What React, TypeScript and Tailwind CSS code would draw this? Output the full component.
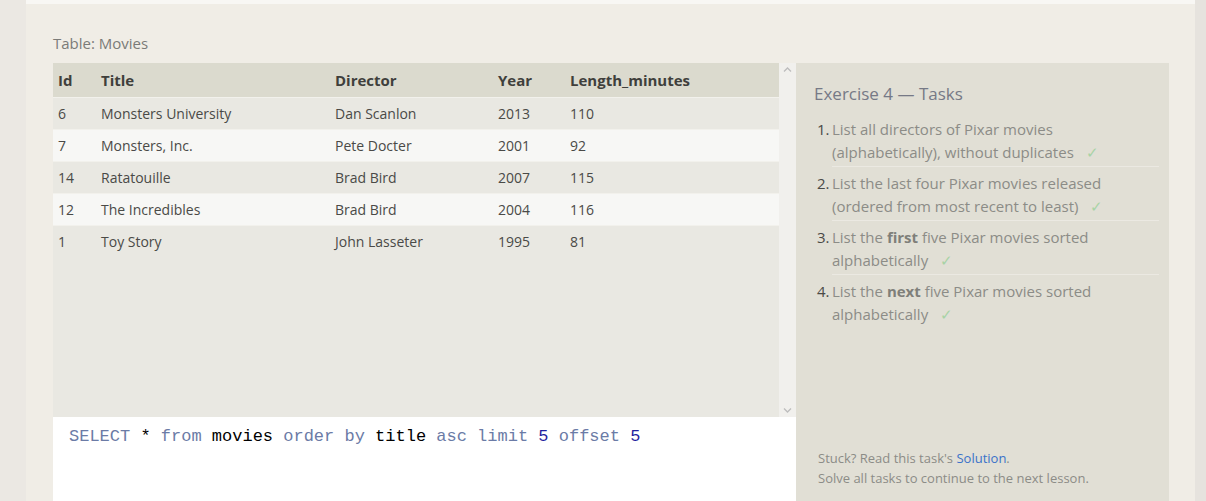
import React from "react";

const rows = [
  { id: 6, title: "Monsters University", director: "Dan Scanlon", year: 2013, len: 110 },
  { id: 7, title: "Monsters, Inc.", director: "Pete Docter", year: 2001, len: 92 },
  { id: 14, title: "Ratatouille", director: "Brad Bird", year: 2007, len: 115 },
  { id: 12, title: "The Incredibles", director: "Brad Bird", year: 2004, len: 116 },
  { id: 1, title: "Toy Story", director: "John Lasseter", year: 1995, len: 81 },
];

function Check() {
  return <span className="ml-3 text-[#a8d3a6]">✓</span>;
}

const tasks: React.ReactNode[] = [
  <>List all directors of Pixar movies (alphabetically), without duplicates<Check /></>,
  <>List the last four Pixar movies released (ordered from most recent to least)<Check /></>,
  <>List the <b className="font-bold text-[#7f7f7a]">first</b> five Pixar movies sorted alphabetically<Check /></>,
  <>List the <b className="font-bold text-[#7f7f7a]">next</b> five Pixar movies sorted alphabetically<Check /></>,
];

export default function App() {
  return (
    <div
      className="flex h-[501px] w-[1206px] overflow-hidden bg-[#e6e3de]"
      style={{ fontFamily: '"Segoe UI", "Open Sans", sans-serif' }}
    >
      <div className="w-[26px] shrink-0 bg-[#ebe8e3]" />
      <div className="flex w-[1169px] shrink-0 flex-col bg-[#f0ede6]">
        <div className="h-[4px] bg-[#f8f7f4]" />
        <div className="flex flex-1 flex-col pl-[27px] pr-[25px] pt-[29px]">
          <div className="mb-[9px] h-[21px] text-[15px] leading-[21px] text-[#7b7b78]">Table: Movies</div>
          <div className="flex flex-1">
            <div className="flex w-[743px] flex-col">
              <div className="flex h-[354px]">
                <div className="flex w-[726px] flex-col bg-[#e9e8e2]">
                  <div className="flex h-[34px] items-center bg-[#dbdace] text-[15px] font-bold text-[#3f3f3c]">
                    <div className="w-[43px] pl-[5px]">Id</div>
                    <div className="w-[234px] pl-[5px]">Title</div>
                    <div className="w-[163px] pl-[5px]">Director</div>
                    <div className="w-[72px] pl-[5px]">Year</div>
                    <div className="flex-1 pl-[5px]">Length_minutes</div>
                  </div>
                  {rows.map((r, i) => (
                    <div
                      key={r.id}
                      className={`flex h-[32px] items-center border-t border-[#f2f1ec] text-[14px] text-[#4a4a47] ${
                        i % 2 === 0 ? "bg-[#e9e8e2]" : "bg-[#f7f7f5]"
                      }`}
                    >
                      <div className="w-[43px] pl-[5px]">{r.id}</div>
                      <div className="w-[234px] pl-[5px]">{r.title}</div>
                      <div className="w-[163px] pl-[5px]">{r.director}</div>
                      <div className="w-[72px] pl-[5px]">{r.year}</div>
                      <div className="flex-1 pl-[5px]">{r.len}</div>
                    </div>
                  ))}
                </div>
                <div className="flex w-[17px] flex-col items-center justify-between bg-[#f1f0ed] py-[3px]">
                  <svg width="9" height="7" viewBox="0 0 9 7">
                    <path d="M1 5.5 L4.5 2 L8 5.5" fill="none" stroke="#bdbdbd" strokeWidth="1.3" />
                  </svg>
                  <svg width="9" height="7" viewBox="0 0 9 7">
                    <path d="M1 1.5 L4.5 5 L8 1.5" fill="none" stroke="#bdbdbd" strokeWidth="1.3" />
                  </svg>
                </div>
              </div>
              <div
                className="flex-1 bg-white pl-[16px] pt-[9px] text-[17px] leading-[22px]"
                style={{ fontFamily: '"Courier New", "Liberation Mono", monospace' }}
              >
                <span className="text-[#6b7ba6]">SELECT</span> <span className="text-black">*</span>{" "}
                <span className="text-[#6b7ba6]">from</span> <span className="text-black">movies</span>{" "}
                <span className="text-[#6b7ba6]">order by</span> <span className="text-black">title</span>{" "}
                <span className="text-[#6b7ba6]">asc limit</span> <span className="text-[#1f1f9e]">5</span>{" "}
                <span className="text-[#6b7ba6]">offset</span> <span className="text-[#1f1f9e]">5</span>
              </div>
            </div>
            <div className="flex w-[373px] flex-col bg-[#e1dfd5] pl-[18px] pr-[9px] pt-[19px]">
              <div className="text-[17px] leading-[24px] text-[#767986]">Exercise 4 — Tasks</div>
              <ol className="mt-[12px] pl-[3px]">
                {tasks.map((t, i) => (
                  <li key={i} className="flex text-[15px] leading-[23px] text-[#8c8c87]">
                    <span className="w-[15px] shrink-0 text-[#4a4a47]">{i + 1}.</span>
                    <div
                      className={`w-[327px] pb-[2px] ${i < 3 ? "mb-[5px] border-b border-[#ebe9e2]" : ""}`}
                    >
                      <div className="max-w-[290px]">{t}</div>
                    </div>
                  </li>
                ))}
              </ol>
              <div className="mt-auto pb-[13px] pl-[4px] text-[13px] leading-[20px] text-[#8c8c87]">
                <div>
                  Stuck? Read this task's <span className="text-[#3a72c9]">Solution</span>.
                </div>
                <div>Solve all tasks to continue to the next lesson.</div>
              </div>
            </div>
          </div>
        </div>
      </div>
    </div>
  );
}
